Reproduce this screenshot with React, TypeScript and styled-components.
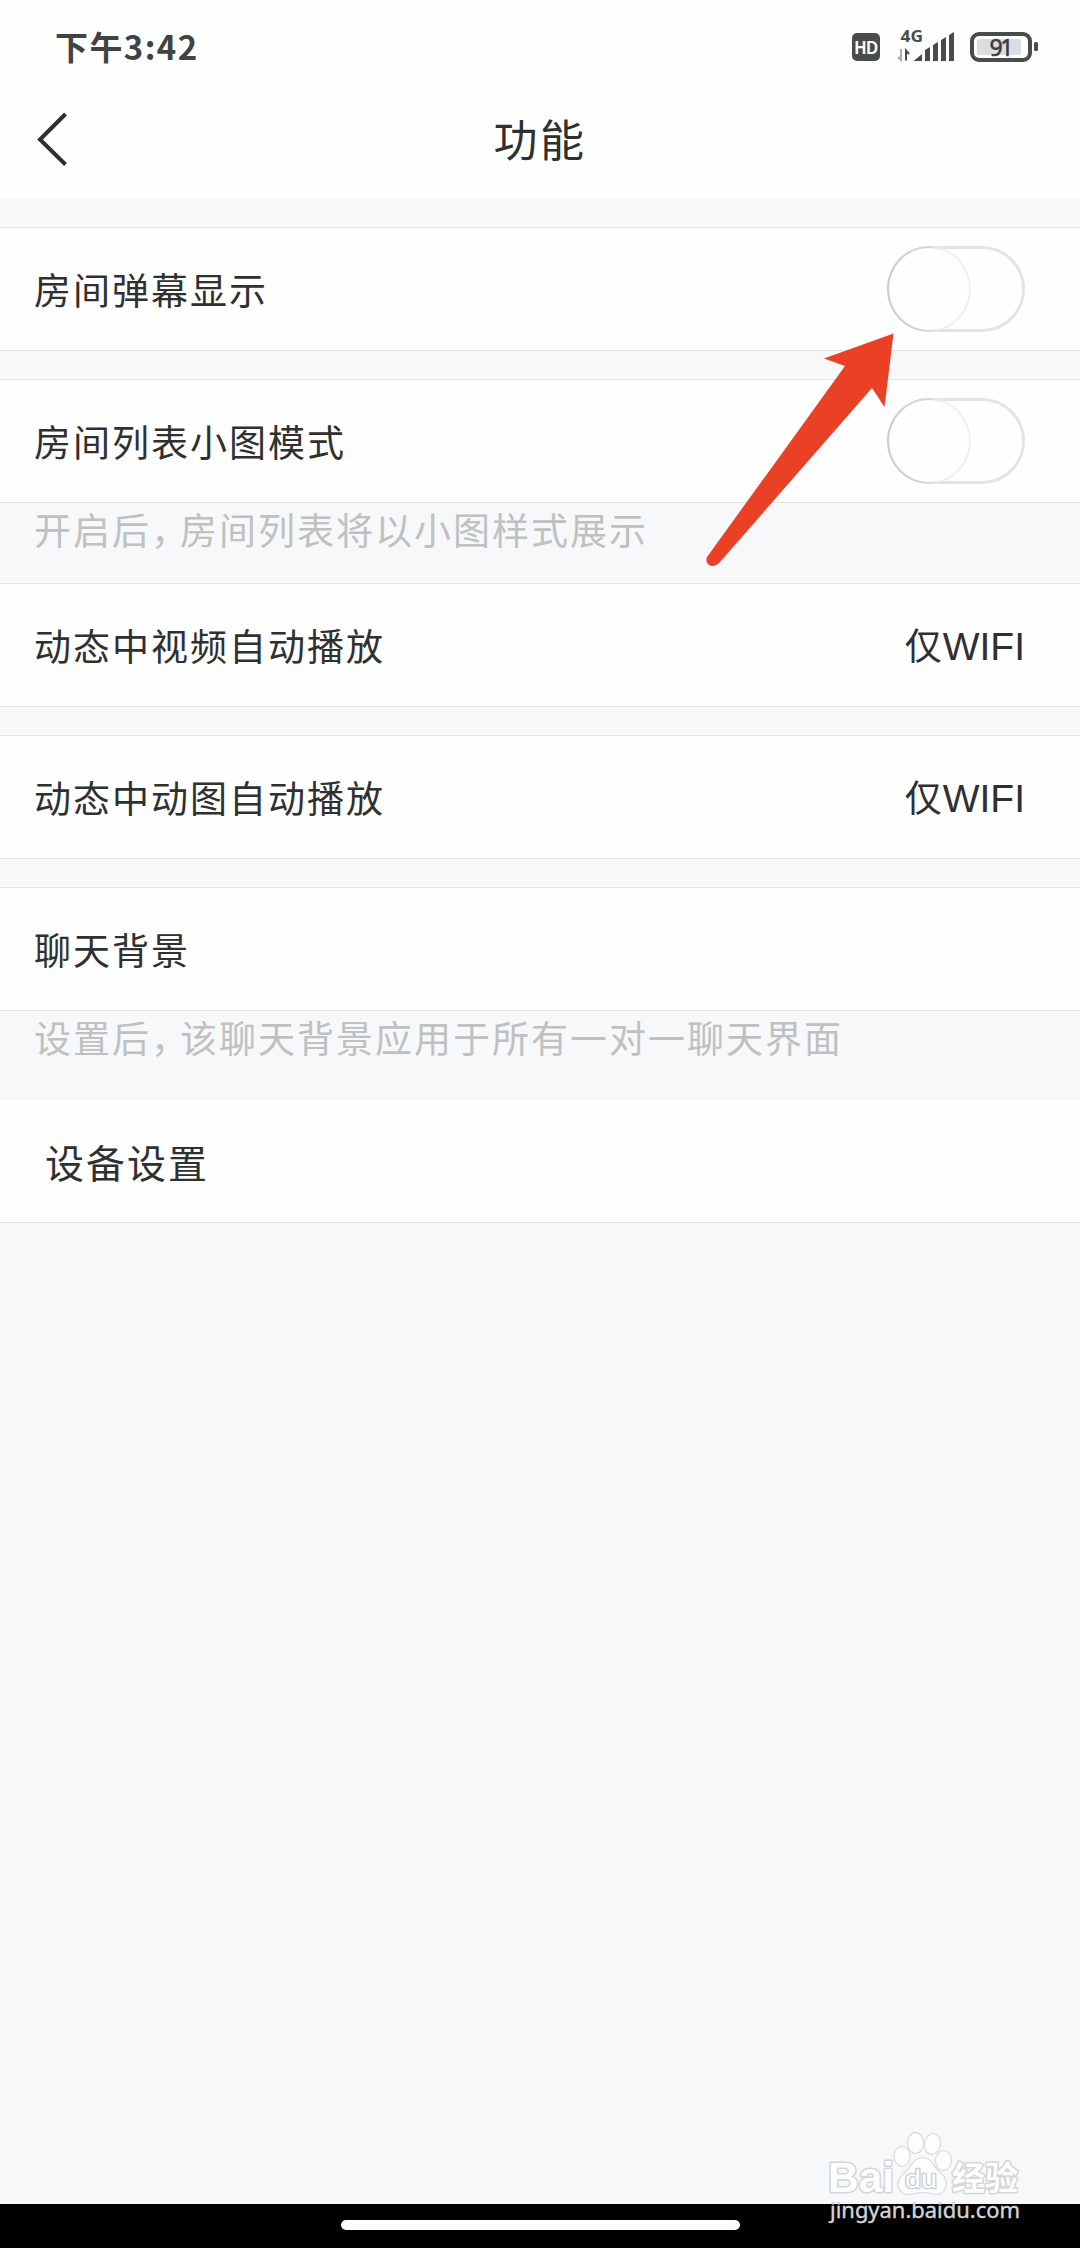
import React from "react";
import styled, { createGlobalStyle } from "styled-components";

const GlobalStyle = createGlobalStyle`
  * { box-sizing: border-box; }
  body {
    margin: 0;
    background: #f7f8fa;
    font-family: "Liberation Sans", "Noto Sans CJK SC", sans-serif;
    color: #2f3131;
  }
`;

const Screen = styled.main`
  position: relative;
  display: flex;
  flex-direction: column;
  width: 1080px;
  height: 2248px;
  overflow: hidden;
  background: #f7f8fa;
`;

const Top = styled.header`
  display: flex;
  flex-direction: column;
  height: 199px;
  background: #fdfefe;
`;

const StatusBar = styled.div`
  display: flex;
  align-items: center;
  justify-content: space-between;
  height: 94px;
  padding: 0 42px 0 55px;
`;

const Clock = styled.time`
  display: flex;
  align-items: center;
  padding-bottom: 2px;
  font-family: "Noto Sans CJK SC", sans-serif;
  font-size: 33px;
  font-weight: 700;
  line-height: 40px;
  letter-spacing: 1.4px;
  color: #414343;
`;

const StatusIcons = styled.svg`
  display: block;
  width: 188px;
  height: 60px;
`;

const NavBar = styled.div`
  display: grid;
  grid-template-columns: 108px 1fr 108px;
  align-items: center;
  height: 91px;
`;

const BackButton = styled.button`
  display: flex;
  padding: 0 0 0 36px;
  border: 0;
  background: none;
`;

const Title = styled.h1`
  margin: 0;
  padding-top: 4px;
  font-size: 44px;
  font-weight: 400;
  line-height: 60px;
  letter-spacing: 2.6px;
  text-align: center;
  color: #2f3131;
`;

const List = styled.section`
  display: flex;
  flex: 1;
  flex-direction: column;
  padding-top: 28px;
`;

const Row = styled.div<{ $gap?: number; $lip?: boolean; $inset?: number; $openTop?: boolean }>`
  display: flex;
  align-items: center;
  justify-content: space-between;
  flex: none;
  height: ${(p) => (p.$openTop ? 123 : 124)}px;
  margin-bottom: ${(p) => p.$gap ?? 0}px;
  padding: 0 55px 0 ${(p) => p.$inset ?? 34}px;
  border-top: ${(p) => (p.$openTop ? "0" : "1px solid #e2e4e4")};
  border-bottom: 1px solid #e2e4e4;
  background: #fefefe;
  box-shadow: ${(p) => (p.$lip ? "0 -2px 0 #fcfdfd" : "none")};
`;

const Label = styled.span<{ $large?: boolean }>`
  padding-top: 7px;
  font-size: ${(p) => (p.$large ? 39 : 37)}px;
  line-height: 54px;
  letter-spacing: 2px;
`;

const Value = styled.span`
  padding-top: 5px;
  font-size: 39px;
  line-height: 54px;
`;

const ValuePrefix = styled.span`
  font-size: 37px;
  letter-spacing: 1px;
`;

const Hint = styled.p<{ $height: number }>`
  flex: none;
  height: ${(p) => p.$height}px;
  margin: 0;
  padding: 3px 34px 0;
  font-size: 37px;
  line-height: 54px;
  letter-spacing: 2px;
  color: #bfc1c1;
`;

const Comma = styled.span`
  letter-spacing: -8px;
`;

const Switch = styled.button`
  display: flex;
  width: 138px;
  height: 86px;
  padding: 0;
  border: 3px solid #e3e5e5;
  border-radius: 43px;
  background: #fefefe;
`;

const Knob = styled.span`
  flex: none;
  width: 84px;
  height: 86px;
  margin: -3px;
  border: 2px solid transparent;
  border-radius: 50%;
  background:
    linear-gradient(#fefefe, #fefefe) padding-box,
    linear-gradient(90deg, #cbcdcd 0%, #d6d8d8 50%, #eff0f0 66%) border-box;
`;

const GestureBar = styled.footer`
  display: flex;
  flex: none;
  justify-content: center;
  height: 44px;
  padding-top: 16px;
  background: #000;
`;

const GesturePill = styled.div`
  width: 399px;
  height: 10px;
  border-radius: 5px;
  background: #fdfefe;
`;

const ArrowOverlay = styled.svg`
  position: absolute;
  left: 700px;
  top: 328px;
  width: 200px;
  height: 244px;
  pointer-events: none;
`;

const Watermark = styled.svg`
  position: absolute;
  left: 820px;
  top: 2126px;
  width: 210px;
  height: 104px;
  pointer-events: none;
`;

function Status() {
  const ink = "#4a4c4c";
  return (
    <StatusIcons viewBox="850 17 188 60">
      <rect x="852" y="33" width="28" height="28" rx="5" fill={ink} />
      <text x="854.5" y="53.500" fontSize="17.500" fontWeight="700" fill="#fff" textLength="23.500" lengthAdjust="spacingAndGlyphs">HD</text>
      <text x="900.500" y="42" fontSize="16" fontWeight="700" fontFamily="Noto Sans" fill={ink} textLength="22.500" lengthAdjust="spacingAndGlyphs">4G</text>
      <path d="M901 49V60L898 57" fill="none" stroke="#a9abab" strokeWidth="2" />
      <path d="M906 60.500V50.500L909 54" fill="none" stroke={ink} strokeWidth="2" />
      <path d="M913.500 61L922 54V61Z M925 61V50L930 47V61Z M933 61V45L938 42V61Z M941 61V40L946 37V61Z M949 61V35L954 32V61Z" fill={ink} />
      <rect x="972" y="34" width="58" height="26" rx="7" fill="none" stroke={ink} strokeWidth="4" />
      <rect x="977" y="39" width="44" height="16" rx="2" fill="#dcdede" />
      <text x="989.500" y="55.500" fontSize="23" fontFamily="Noto Sans" fill="#3c3e3e" stroke="#3c3e3e" strokeWidth="0.600" textLength="24">91</text>
      <rect x="1034" y="42" width="4" height="9" rx="1.500" fill={ink} />
    </StatusIcons>
  );
}

function Toggle({ label }: { label: string }) {
  return (
    <Switch role="switch" aria-checked={false} aria-label={label}>
      <Knob />
    </Switch>
  );
}

function Wifi() {
  return (
    <Value>
      <ValuePrefix>仅</ValuePrefix>WIFI
    </Value>
  );
}

export default function App() {
  return (
    <>
      <GlobalStyle />
      <Screen>
        <Top>
          <StatusBar>
            <Clock>下午3:42</Clock>
            <Status />
          </StatusBar>
          <NavBar>
            <BackButton aria-label="返回">
              <svg width="34" height="56" viewBox="36 111.500 34 56">
                <path d="M65.500 113.500L40 139L65.500 164" fill="none" stroke="#2f3131" strokeWidth="4" />
              </svg>
            </BackButton>
            <Title>功能</Title>
          </NavBar>
        </Top>
        <List>
          <Row $gap={28} $lip>
            <Label>房间弹幕显示</Label>
            <Toggle label="房间弹幕显示" />
          </Row>
          <Row $lip>
            <Label>房间列表小图模式</Label>
            <Toggle label="房间列表小图模式" />
          </Row>
          <Hint $height={80}>开启后<Comma>，</Comma>房间列表将以小图样式展示</Hint>
          <Row $gap={28}>
            <Label>动态中视频自动播放</Label>
            <Wifi />
          </Row>
          <Row $gap={28}>
            <Label>动态中动图自动播放</Label>
            <Wifi />
          </Row>
          <Row>
            <Label>聊天背景</Label>
          </Row>
          <Hint $height={89}>设置后<Comma>，</Comma>该聊天背景应用于所有一对一聊天界面</Hint>
          <Row $openTop $inset={45}>
            <Label $large>设备设置</Label>
          </Row>
        </List>
        <GestureBar>
          <GesturePill />
        </GestureBar>
        <ArrowOverlay viewBox="700 328 200 244">
          <path d="M893.500 333.500L824 358.500L845 366L707 557Q705 562 709 565Q714 568 720 562L872 388L884.500 407Z" fill="#ea4025" />
        </ArrowOverlay>
        <Watermark viewBox="820 2126 210 104">
          <g fill="#fdfdfd" stroke="#d3d5d6" strokeWidth="2" paintOrder="stroke" strokeLinejoin="round">
            <text x="828" y="2192" fontSize="42" fontWeight="700" strokeWidth="3" textLength="66" lengthAdjust="spacingAndGlyphs">Bai</text>
            <ellipse cx="902" cy="2156.500" rx="7.500" ry="9.500" />
            <ellipse cx="915.500" cy="2143" rx="7.500" ry="10" />
            <ellipse cx="932.500" cy="2144" rx="7.500" ry="10" transform="rotate(12 932.500 2144)" />
            <ellipse cx="943.500" cy="2160.500" rx="7.500" ry="9.500" />
            <path d="M922.500 2158C914 2158 912 2167 906 2172C899 2178 896 2185 901 2191C907 2197 914 2192 922.500 2192C931 2192 938 2197 943 2191C948 2185 946 2177 939 2172C933 2167 931 2158 922.500 2158Z" />
            <text x="905" y="2188" fontSize="26" strokeWidth="2.500" stroke="#c9cbcc" textLength="32" lengthAdjust="spacingAndGlyphs">du</text>
            <text x="952" y="2190" fontSize="33" fontWeight="700" strokeWidth="3" fontFamily="Noto Sans CJK SC" textLength="66">经验</text>
          </g>
          <text x="830" y="2218" fontSize="22.500" fontFamily="Noto Sans" fill="#d4d5d6" stroke="#d4d5d6" strokeWidth="0.400" textLength="190" lengthAdjust="spacingAndGlyphs">jingyan.baidu.com</text>
        </Watermark>
      </Screen>
    </>
  );
}
